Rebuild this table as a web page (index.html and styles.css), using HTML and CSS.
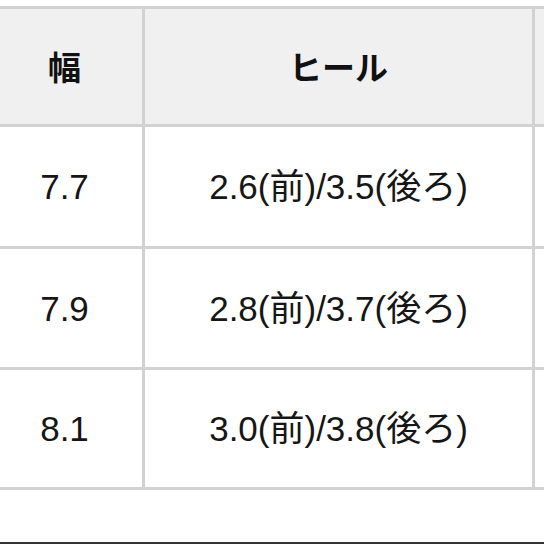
FILE: index.html
```html
<!DOCTYPE html>
<html lang="ja">
<head>
<meta charset="utf-8">
<link rel="stylesheet" href="styles.css">
</head>
<body>
<div class="page">
  <div class="sizes">
    <div class="cell head">幅</div>
    <div class="cell head">ヒール</div>
    <div class="cell head"></div>

    <div class="cell r1">7.7</div>
    <div class="cell r1">2.6(前)/3.5(後ろ)</div>
    <div class="cell r1"></div>

    <div class="cell r2">7.9</div>
    <div class="cell r2">2.8(前)/3.7(後ろ)</div>
    <div class="cell r2"></div>

    <div class="cell r3">8.1</div>
    <div class="cell r3">3.0(前)/3.8(後ろ)</div>
    <div class="cell r3"></div>
  </div>
  <div class="footer"></div>
</div>
</body>
</html>
```
FILE: styles.css
```css
html, body {
  margin: 0;
  padding: 0;
  background: #ffffff;
}
body {
  width: 544px;
  height: 544px;
  overflow: hidden;
  font-family: "Liberation Sans", "Noto Sans CJK JP", sans-serif;
  color: #161616;
}
.page {
  padding-top: 6px;
  height: 538px;
  display: flex;
  flex-direction: column;
}
.sizes {
  display: grid;
  grid-template-columns: 158px 390px 60px;
  grid-template-rows: 118px 122px 121px 120px;
  margin-left: -13px;
  width: 608px;
  border-top: 3px solid #d2d2d2;
}
.cell {
  box-sizing: border-box;
  border-right: 3px solid #d2d2d2;
  border-bottom: 3px solid #d2d2d2;
  display: flex;
  align-items: center;
  justify-content: center;
  line-height: 1;
  font-size: 35px;
  white-space: nowrap;
}
.head {
  background: #f0f0f0;
  font-family: "Noto Sans CJK JP", sans-serif;
  font-weight: 700;
  font-size: 33px;
  color: #111111;
}
.footer {
  margin-top: auto;
  height: 2px;
  background: #333333;
}
```
